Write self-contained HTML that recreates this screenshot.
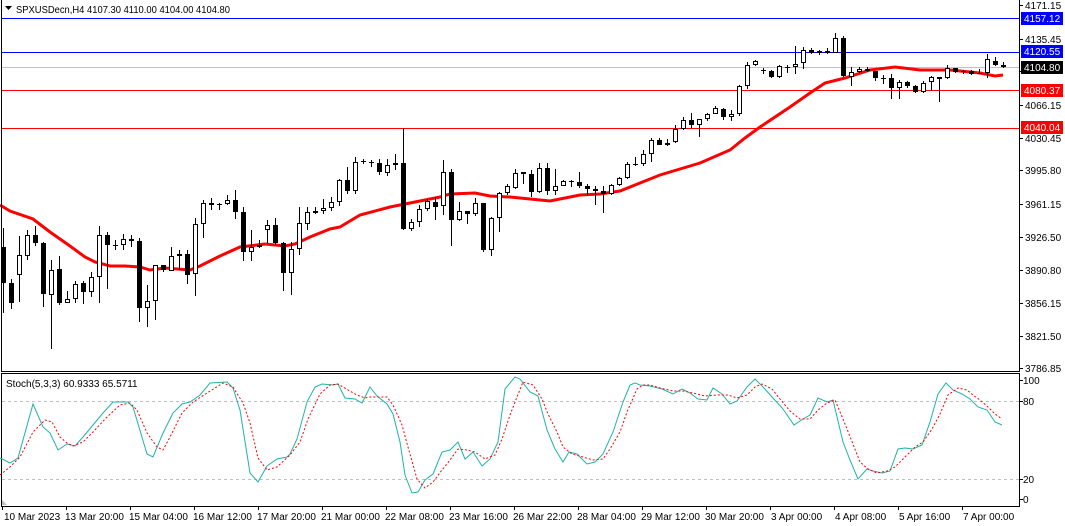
<!DOCTYPE html>
<html><head><meta charset="utf-8"><style>
html,body{margin:0;padding:0;background:#fff;width:1065px;height:526px;overflow:hidden}
svg{display:block;font-family:"Liberation Sans",sans-serif}
</style></head><body>
<svg width="1065" height="526" viewBox="0 0 1065 526" xmlns="http://www.w3.org/2000/svg">
<rect width="1065" height="526" fill="#fff"/>
<g shape-rendering="crispEdges">
<line x1="2" y1="18.5" x2="1019" y2="18.5" stroke="#0000ff"/>
<line x1="2" y1="52.5" x2="1019" y2="52.5" stroke="#0000ff"/>
<line x1="2" y1="67.5" x2="1019" y2="67.5" stroke="#c0c0c0"/>
<line x1="2" y1="90.5" x2="1019" y2="90.5" stroke="#ff0000"/>
<line x1="2" y1="128.5" x2="1019" y2="128.5" stroke="#ff0000"/>
</g>
<polyline fill="none" stroke="#ff0000" stroke-width="3" points="0,205 10,211 33,219 50,232 70,246 85,257 95,262 110,266 125,266 140,267 150,270 165,268 190,270 200,266 220,256 240,247 265,244 285,246 295,244 310,237 330,229 340,227 360,215 390,207 420,201 440,197 450,194 475,193 490,196 510,197 530,199 550,201 560,199 580,195 600,194 620,191 640,183 660,175 700,163 730,150 745,138 760,127 790,107 810,93 825,83 845,78 870,70 895,67 920,70 950,70 980,73 995,76 1003,75"/>
<path stroke="#000" stroke-width="1" fill="none" shape-rendering="crispEdges" d="M3.5 228V313M11.5 279V309M19.5 236V302M27.5 230V260M35.5 226V246M43.5 242V307M51.5 260V349M59.5 256V305M67.5 291V303M75.5 281V303M83.5 281V304M91.5 272V297M99.5 226V303M107.5 232V289M115.5 240V250M123.5 234V250M131.5 235V247M139.5 238V322M147.5 285V327M155.5 265V320M163.5 265V272M171.5 247V271M179.5 250V270M187.5 250V284M195.5 218V296M203.5 200V238M211.5 198V210M219.5 203V210M227.5 195V205M235.5 190V219M243.5 207V261M251.5 230V261M259.5 240V248M267.5 220V243M275.5 218V245M283.5 242V291M291.5 242V295M299.5 207V255M307.5 207V230M315.5 207V214M323.5 199V214M331.5 197V211M339.5 179V206M347.5 167V194M355.5 157V194M363.5 159V164M371.5 160V167M379.5 159V175M387.5 159V176M395.5 154V170M403.5 128V230M411.5 219V231M419.5 205V227M427.5 199V211M435.5 197V220M443.5 160V215M451.5 169V246M459.5 202V221M467.5 211V224M475.5 198V216M483.5 203V252M491.5 217V256M499.5 192V232M507.5 184V195M515.5 169V189M523.5 172V184M531.5 170V197M539.5 163V193M547.5 163V195M555.5 169V195M563.5 180V186M571.5 180V187M579.5 172V188M587.5 184V195M595.5 186V205M603.5 186V213M611.5 184V195M619.5 177V186M627.5 162V179M635.5 157V166M643.5 150V166M651.5 138V162M659.5 138V145M667.5 139V146M675.5 125V143M683.5 117V130M691.5 113V128M699.5 119V137M707.5 113V121M715.5 106V114M723.5 108V120M731.5 110V121M739.5 85V116M747.5 62V89M755.5 60V66M763.5 68V74M771.5 70V78M779.5 65V78M787.5 65V73M795.5 46V74M803.5 47V69M811.5 48V54M819.5 50V55M827.5 48V54M835.5 33V53M843.5 36V77M851.5 67V86M859.5 67V73M867.5 67V72M875.5 71V81M883.5 75V84M891.5 74V99M899.5 80V99M907.5 81V88M915.5 85V93M923.5 81V93M931.5 76V91M939.5 77V102M947.5 65V79M955.5 68V73M963.5 70V74M971.5 70V75M979.5 69V74M987.5 54V78M995.5 57V66M1003.5 62V68"/>
<g fill="#000" shape-rendering="crispEdges">
<rect x="1" y="247" width="5" height="36"/><rect x="9" y="283" width="5" height="20"/><rect x="33" y="235" width="5" height="8"/><rect x="41" y="243" width="5" height="51"/><rect x="57" y="269" width="5" height="34"/><rect x="81" y="283" width="5" height="9"/><rect x="105" y="235" width="5" height="10"/><rect x="113" y="245" width="5" height="1"/><rect x="129" y="239" width="5" height="2"/><rect x="137" y="241" width="5" height="67"/><rect x="161" y="265" width="5" height="5"/><rect x="185" y="254" width="5" height="21"/><rect x="209" y="203" width="5" height="2"/><rect x="217" y="204" width="5" height="1"/><rect x="233" y="200" width="5" height="12"/><rect x="241" y="212" width="5" height="40"/><rect x="257" y="245" width="5" height="2"/><rect x="273" y="225" width="5" height="18"/><rect x="281" y="243" width="5" height="30"/><rect x="313" y="211" width="5" height="2"/><rect x="345" y="180" width="5" height="11"/><rect x="361" y="161" width="5" height="1"/><rect x="369" y="162" width="5" height="1"/><rect x="377" y="163" width="5" height="9"/><rect x="401" y="163" width="5" height="66"/><rect x="433" y="202" width="5" height="5"/><rect x="449" y="172" width="5" height="48"/><rect x="465" y="211" width="5" height="3"/><rect x="481" y="203" width="5" height="47"/><rect x="521" y="172" width="5" height="2"/><rect x="529" y="174" width="5" height="18"/><rect x="545" y="168" width="5" height="23"/><rect x="569" y="181" width="5" height="1"/><rect x="577" y="182" width="5" height="4"/><rect x="585" y="186" width="5" height="3"/><rect x="593" y="189" width="5" height="2"/><rect x="601" y="191" width="5" height="3"/><rect x="633" y="164" width="5" height="1"/><rect x="657" y="140" width="5" height="5"/><rect x="689" y="120" width="5" height="5"/><rect x="721" y="109" width="5" height="8"/><rect x="761" y="70" width="5" height="1"/><rect x="769" y="71" width="5" height="6"/><rect x="785" y="67" width="5" height="1"/><rect x="809" y="50" width="5" height="3"/><rect x="825" y="51" width="5" height="2"/><rect x="841" y="38" width="5" height="38"/><rect x="865" y="69" width="5" height="2"/><rect x="873" y="71" width="5" height="7"/><rect x="881" y="78" width="5" height="1"/><rect x="889" y="78" width="5" height="10"/><rect x="905" y="82" width="5" height="4"/><rect x="913" y="86" width="5" height="6"/><rect x="937" y="77" width="5" height="2"/><rect x="953" y="68" width="5" height="4"/><rect x="961" y="71" width="5" height="1"/><rect x="969" y="71" width="5" height="3"/><rect x="977" y="73" width="5" height="1"/><rect x="993" y="61" width="5" height="4"/><rect x="1001" y="65" width="5" height="2"/>
</g>
<g fill="#fff" stroke="#000" stroke-width="1" shape-rendering="crispEdges">
<rect x="17.5" y="255.5" width="4" height="19"/><rect x="25.5" y="235.5" width="4" height="20"/><rect x="49.5" y="270.5" width="4" height="24"/><rect x="65.5" y="299.5" width="4" height="3"/><rect x="73.5" y="284.5" width="4" height="14"/><rect x="89.5" y="277.5" width="4" height="14"/><rect x="97.5" y="235.5" width="4" height="41"/><rect x="121.5" y="239.5" width="4" height="5"/><rect x="145.5" y="301.5" width="4" height="6"/><rect x="153.5" y="265.5" width="4" height="35"/><rect x="169.5" y="256.5" width="4" height="14"/><rect x="177.5" y="254.5" width="4" height="1"/><rect x="193.5" y="224.5" width="4" height="49"/><rect x="201.5" y="203.5" width="4" height="20"/><rect x="225.5" y="200.5" width="4" height="3"/><rect x="249.5" y="247.5" width="4" height="4"/><rect x="265.5" y="225.5" width="4" height="4"/><rect x="289.5" y="249.5" width="4" height="23"/><rect x="297.5" y="223.5" width="4" height="25"/><rect x="305.5" y="212.5" width="4" height="11"/><rect x="321.5" y="208.5" width="4" height="2"/><rect x="329.5" y="202.5" width="4" height="5"/><rect x="337.5" y="180.5" width="4" height="21"/><rect x="353.5" y="162.5" width="4" height="28"/><rect x="385.5" y="165.5" width="4" height="7"/><rect x="393.5" y="163.5" width="4" height="1"/><rect x="409.5" y="222.5" width="4" height="6"/><rect x="417.5" y="209.5" width="4" height="12"/><rect x="425.5" y="201.5" width="4" height="7"/><rect x="441.5" y="172.5" width="4" height="33"/><rect x="457.5" y="211.5" width="4" height="8"/><rect x="473.5" y="203.5" width="4" height="10"/><rect x="489.5" y="218.5" width="4" height="31"/><rect x="497.5" y="193.5" width="4" height="24"/><rect x="505.5" y="186.5" width="4" height="6"/><rect x="513.5" y="173.5" width="4" height="14"/><rect x="537.5" y="168.5" width="4" height="23"/><rect x="553.5" y="186.5" width="4" height="4"/><rect x="561.5" y="181.5" width="4" height="4"/><rect x="609.5" y="185.5" width="4" height="8"/><rect x="617.5" y="178.5" width="4" height="6"/><rect x="625.5" y="164.5" width="4" height="13"/><rect x="641.5" y="154.5" width="4" height="9"/><rect x="649.5" y="140.5" width="4" height="13"/><rect x="665.5" y="143.5" width="4" height="1"/><rect x="673.5" y="129.5" width="4" height="12"/><rect x="681.5" y="120.5" width="4" height="8"/><rect x="697.5" y="119.5" width="4" height="5"/><rect x="705.5" y="114.5" width="4" height="4"/><rect x="713.5" y="108.5" width="4" height="5"/><rect x="729.5" y="114.5" width="4" height="2"/><rect x="737.5" y="86.5" width="4" height="27"/><rect x="745.5" y="65.5" width="4" height="20"/><rect x="753.5" y="61.5" width="4" height="3"/><rect x="777.5" y="66.5" width="4" height="10"/><rect x="793.5" y="64.5" width="4" height="2"/><rect x="801.5" y="50.5" width="4" height="12"/><rect x="817.5" y="51.5" width="4" height="1"/><rect x="833.5" y="38.5" width="4" height="14"/><rect x="849.5" y="72.5" width="4" height="4"/><rect x="857.5" y="69.5" width="4" height="2"/><rect x="897.5" y="82.5" width="4" height="5"/><rect x="921.5" y="83.5" width="4" height="8"/><rect x="929.5" y="77.5" width="4" height="4"/><rect x="945.5" y="68.5" width="4" height="9"/><rect x="985.5" y="59.5" width="4" height="13"/>
</g>
<g fill="none" stroke="#000" shape-rendering="crispEdges">
<path d="M1.5 0V371.5H1019.5V0"/>
<rect x="1.5" y="373.5" width="1018" height="133"/>
</g>
<path d="M5 6h7l-3.5 4z" fill="#000"/>
<text x="16" y="13" font-size="10" fill="#000" textLength="214" lengthAdjust="spacingAndGlyphs">SPXUSDecn,H4  4107.30 4110.00 4104.00 4104.80</text>
<g stroke="#c0c0c0" stroke-dasharray="3 3" shape-rendering="crispEdges">
<line x1="2" y1="401.5" x2="1019" y2="401.5"/>
<line x1="2" y1="479.5" x2="1019" y2="479.5"/>
</g>
<polyline fill="none" stroke="#20b2aa" stroke-width="1" points="0,458 10,463 18,458 33,404 43,427 50,433 58,450 67,444 75,446 83,437 93,425 103,413 113,402 120,402 128,402 133,407 147,454 153,457 163,433 173,413 182,404 190,402 200,395 210,383 227,382 233,388 240,410 250,473 258,482 267,466 277,459 287,457 290,454 297,439 307,402 315,387 322,384 333,385 338,384 345,398 355,399 362,403 370,387 377,396 387,404 393,414 400,442 405,475 412,493 418,492 425,480 433,474 442,452 450,450 458,442 465,459 473,452 482,466 490,459 498,442 505,389 515,377 520,379 530,392 538,396 547,430 555,449 563,462 569,452 577,454 587,464 595,462 603,454 613,432 623,402 630,385 635,383 640,385 650,386 662,389 673,394 682,389 690,393 698,399 707,400 713,388 722,394 730,404 737,401 747,387 755,379 763,387 773,398 783,409 794,425 803,419 810,415 818,398 827,402 833,400 843,442 850,460 858,479 867,469 873,471 882,473 890,471 898,449 905,448 913,449 922,445 930,422 938,394 946,383 953,390 962,394 970,399 978,407 987,410 995,422 1002,425"/>
<polyline fill="none" stroke="#ff0000" stroke-width="1" stroke-dasharray="2 2" points="0,475 10,467 20,457 33,432 45,420 52,422 60,437 67,443 73,446 83,442 93,432 107,417 120,405 130,403 137,410 147,433 157,447 163,450 170,437 182,413 193,402 207,393 223,383 233,387 243,403 250,423 258,458 267,470 277,467 290,455 300,442 308,419 320,394 330,385 338,384 348,390 357,395 365,398 370,397 387,397 393,405 402,425 408,447 417,479 425,488 433,482 442,470 450,460 458,449 467,450 475,452 485,459 495,455 502,439 510,415 517,397 523,382 533,385 542,399 548,414 557,432 563,447 572,454 583,457 593,460 603,459 610,449 620,432 627,412 637,389 643,385 650,385 660,388 673,391 683,391 693,393 705,396 717,395 728,395 737,398 747,395 755,387 762,384 772,389 780,399 790,411 800,419 810,419 818,410 827,403 835,400 843,419 853,444 860,462 868,469 877,473 887,471 895,467 905,457 915,447 923,442 932,429 940,414 948,395 958,388 967,390 973,395 980,400 988,407 995,414 1002,419"/>
<text x="6" y="387" font-size="10" fill="#000">Stoch(5,3,3) 60.9333 65.5711</text>
<path d="M2 500l5 5h-5z" fill="#c0c0c0"/>
<g stroke="#000" shape-rendering="crispEdges">
<path d="M1020 5.5h3M1020 39.5h3M1020 71.5h3M1020 105.5h3M1020 138.5h3M1020 170.5h3M1020 204.5h3M1020 237.5h3M1020 270.5h3M1020 303.5h3M1020 336.5h3M1020 368.5h3M1020 380.5h3M1020 401.5h3M1020 479.5h3M1020 499.5h3"/>
<path d="M2.5 507v3M66.5 507v3M130.5 507v3M194.5 507v3M258.5 507v3M322.5 507v3M386.5 507v3M450.5 507v3M514.5 507v3M578.5 507v3M642.5 507v3M706.5 507v3M770.5 507v3M834.5 507v3M898.5 507v3M962.5 507v3"/>
</g>
<g font-size="10" fill="#000">
<text x="1025" y="9">4171.15</text>
<text x="1025" y="43">4135.45</text>
<text x="1025" y="109">4066.15</text>
<text x="1025" y="142">4030.45</text>
<text x="1025" y="174">3995.80</text>
<text x="1025" y="208">3961.15</text>
<text x="1025" y="241">3926.50</text>
<text x="1025" y="274">3890.80</text>
<text x="1025" y="307">3856.15</text>
<text x="1025" y="340">3821.50</text>
<text x="1025" y="372">3786.85</text>
<text x="1023" y="384">100</text>
<text x="1023" y="405">80</text>
<text x="1023" y="483">20</text>
<text x="1023" y="503">0</text>
</g>
<g shape-rendering="crispEdges">
<rect x="1021" y="12" width="42" height="13" fill="#0000ff"/>
<rect x="1021" y="45" width="42" height="13" fill="#0000ff"/>
<rect x="1021" y="61" width="42" height="13" fill="#000"/>
<rect x="1021" y="84" width="42" height="13" fill="#ff0000"/>
<rect x="1021" y="121" width="42" height="13" fill="#ff0000"/>
</g>
<g font-size="10" fill="#fff">
<text x="1024" y="22">4157.12</text>
<text x="1024" y="55">4120.55</text>
<text x="1024" y="71">4104.80</text>
<text x="1024" y="94">4080.37</text>
<text x="1024" y="131">4040.04</text>
</g>
<g font-size="10" fill="#000">
<text x="4" y="520">10 Mar 2023</text>
<text x="65" y="520">13 Mar 20:00</text>
<text x="129" y="520">15 Mar 04:00</text>
<text x="193" y="520">16 Mar 12:00</text>
<text x="257" y="520">17 Mar 20:00</text>
<text x="321" y="520">21 Mar 00:00</text>
<text x="385" y="520">22 Mar 08:00</text>
<text x="449" y="520">23 Mar 16:00</text>
<text x="513" y="520">26 Mar 22:00</text>
<text x="577" y="520">28 Mar 04:00</text>
<text x="641" y="520">29 Mar 12:00</text>
<text x="705" y="520">30 Mar 20:00</text>
<text x="771" y="520">3 Apr 00:00</text>
<text x="835" y="520">4 Apr 08:00</text>
<text x="899" y="520">5 Apr 16:00</text>
<text x="963" y="520">7 Apr 00:00</text>
</g>
</svg>
</body></html>
